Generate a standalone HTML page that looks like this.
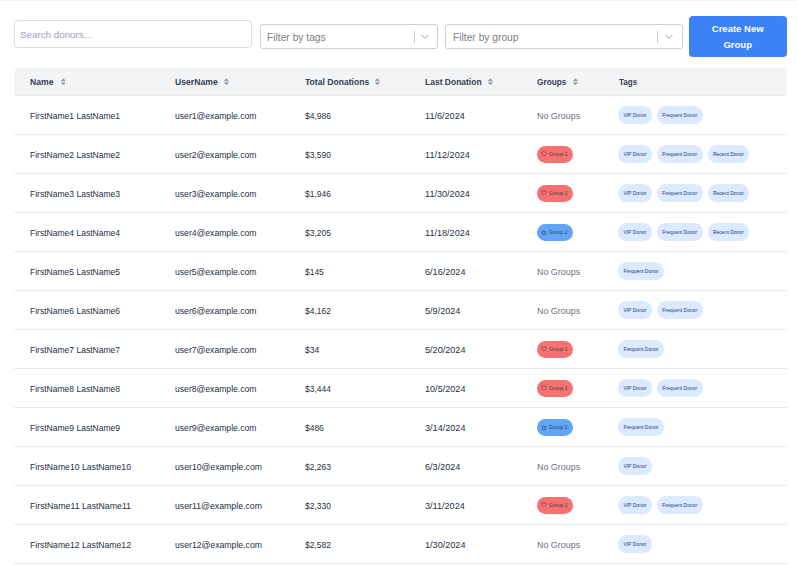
<!DOCTYPE html><html><head><meta charset="utf-8"><style>
*{box-sizing:border-box;margin:0;padding:0}
svg{display:block}
html,body{width:798px;height:565px;overflow:hidden;background:#fff;font-family:"Liberation Sans",sans-serif}
.topline{position:absolute;left:0;top:0;width:798px;height:1px;background:#f1f2f4}
.search{position:absolute;left:14px;top:20px;width:238px;height:28px;border:1px solid #d9dce1;border-radius:4px}
.search span{position:absolute;left:5px;top:7.9px;font-size:9.8px;line-height:11px;color:#9ca3af}
.sel{position:absolute;top:24px;height:25px;border:1px solid #d0d0d0;border-radius:3px}
.sel .ph{position:absolute;left:6.5px;top:6.5px;font-size:10px;line-height:11px;color:#808080;white-space:nowrap;transform:scaleX(1.025);transform-origin:0 50%}
.sel .sep{position:absolute;top:6px;width:1px;height:12px;background:#d0d0d0}
.btn{position:absolute;left:689px;top:16px;width:98px;height:41px;background:#3b82f6;border-radius:4px;color:#fff;text-align:center;font-size:9.8px;font-weight:bold;line-height:15.8px;padding-top:4.8px}
.btn span{display:inline-block;transform:scaleX(0.97)}
.thead{position:absolute;left:14px;top:68px;width:773px;height:28px;background:#f3f4f6;border-radius:5px 5px 0 0;border-bottom:1px solid #e9eaee}
.th{position:absolute;top:0;height:27px;line-height:28px;font-size:9.6px;font-weight:bold;color:#374151;white-space:nowrap;transform:scaleX(0.86);transform-origin:0 50%}
.si{position:absolute;top:77.5px}
.row{position:absolute;left:14px;width:773px;height:39px;border-bottom:1px solid #e9eaee}
.td{position:absolute;top:0.5px;height:38px;line-height:39px;font-size:9px;color:#262f3d;white-space:nowrap;transform:scaleX(0.947);transform-origin:0 50%}
.ng{color:#6b7280}
.gc{position:absolute;left:523px;top:10.5px;width:36px;height:17px;border-radius:8.5px;font-size:5.2px;line-height:17px;color:#374151;white-space:nowrap}
.g1{background:#f87171}
.g2{background:#60a5fa}
.gc .gi{position:absolute;left:4.1px;top:5.8px}
.gc span{position:absolute;left:12px;top:0}
.tags{position:absolute;left:604px;top:10.3px;height:17.5px;display:flex;gap:5px}
.tag{height:17.5px;border-radius:8.75px;background:#dbeafe;color:#1e3a8a;font-size:5px;line-height:18.6px;padding:0 5.4px;white-space:nowrap}
</style></head><body>
<div class="topline"></div>
<div class="search"><span>Search donors...</span></div>
<div class="sel" style="left:260px;width:178px"><span class="ph" style="left:5.5px">Filter by tags</span><div class="sep" style="left:152.5px"></div><div style="position:absolute;left:160px;top:9px"><svg width="8" height="6" viewBox="0 0 8 6"><path d="M0.6 1L4 4.4 7.4 1" fill="none" stroke="#c8c8c8" stroke-width="1.1"/></svg></div></div>
<div class="sel" style="left:445px;width:238px"><span class="ph">Filter by group</span><div class="sep" style="left:211px"></div><div style="position:absolute;left:219px;top:9px"><svg width="8" height="6" viewBox="0 0 8 6"><path d="M0.6 1L4 4.4 7.4 1" fill="none" stroke="#c8c8c8" stroke-width="1.1"/></svg></div></div>
<div class="btn"><span>Create New</span><br><span>Group</span></div>
<div class="thead">
<div class="th" style="left:16px;transform:scaleX(0.9)">Name</div>
<div class="th" style="left:161px;transform:scaleX(0.9)">UserName</div>
<div class="th" style="left:291px;transform:scaleX(0.895)">Total Donations</div>
<div class="th" style="left:411px;transform:scaleX(0.885)">Last Donation</div>
<div class="th" style="left:523px;transform:scaleX(0.86)">Groups</div>
<div class="th" style="left:605px;transform:scaleX(0.84)">Tags</div>
</div>
<div class="si" style="left:60.5px"><svg viewBox="0 0 320 512" width="4.8" height="7.6"><path d="M137.4 41.4c12.5-12.5 32.8-12.5 45.3 0l128 128c9.2 9.2 11.9 22.9 6.9 34.9s-16.6 19.8-29.6 19.8H32c-12.9 0-24.6-7.8-29.6-19.8s-2.2-25.7 6.9-34.9l128-128zm0 429.3l-128-128c-9.2-9.2-11.9-22.9-6.9-34.9s16.6-19.8 29.6-19.8H288c12.9 0 24.6 7.8 29.6 19.8s2.2 25.7-6.9 34.9l-128 128c-12.5 12.5-32.8 12.5-45.3 0z" fill="#9ca3af"/></svg></div>
<div class="si" style="left:224px"><svg viewBox="0 0 320 512" width="4.8" height="7.6"><path d="M137.4 41.4c12.5-12.5 32.8-12.5 45.3 0l128 128c9.2 9.2 11.9 22.9 6.9 34.9s-16.6 19.8-29.6 19.8H32c-12.9 0-24.6-7.8-29.6-19.8s-2.2-25.7 6.9-34.9l128-128zm0 429.3l-128-128c-9.2-9.2-11.9-22.9-6.9-34.9s16.6-19.8 29.6-19.8H288c12.9 0 24.6 7.8 29.6 19.8s2.2 25.7-6.9 34.9l-128 128c-12.5 12.5-32.8 12.5-45.3 0z" fill="#9ca3af"/></svg></div>
<div class="si" style="left:375px"><svg viewBox="0 0 320 512" width="4.8" height="7.6"><path d="M137.4 41.4c12.5-12.5 32.8-12.5 45.3 0l128 128c9.2 9.2 11.9 22.9 6.9 34.9s-16.6 19.8-29.6 19.8H32c-12.9 0-24.6-7.8-29.6-19.8s-2.2-25.7 6.9-34.9l128-128zm0 429.3l-128-128c-9.2-9.2-11.9-22.9-6.9-34.9s16.6-19.8 29.6-19.8H288c12.9 0 24.6 7.8 29.6 19.8s2.2 25.7-6.9 34.9l-128 128c-12.5 12.5-32.8 12.5-45.3 0z" fill="#9ca3af"/></svg></div>
<div class="si" style="left:488px"><svg viewBox="0 0 320 512" width="4.8" height="7.6"><path d="M137.4 41.4c12.5-12.5 32.8-12.5 45.3 0l128 128c9.2 9.2 11.9 22.9 6.9 34.9s-16.6 19.8-29.6 19.8H32c-12.9 0-24.6-7.8-29.6-19.8s-2.2-25.7 6.9-34.9l128-128zm0 429.3l-128-128c-9.2-9.2-11.9-22.9-6.9-34.9s16.6-19.8 29.6-19.8H288c12.9 0 24.6 7.8 29.6 19.8s2.2 25.7-6.9 34.9l-128 128c-12.5 12.5-32.8 12.5-45.3 0z" fill="#9ca3af"/></svg></div>
<div class="si" style="left:573px"><svg viewBox="0 0 320 512" width="4.8" height="7.6"><path d="M137.4 41.4c12.5-12.5 32.8-12.5 45.3 0l128 128c9.2 9.2 11.9 22.9 6.9 34.9s-16.6 19.8-29.6 19.8H32c-12.9 0-24.6-7.8-29.6-19.8s-2.2-25.7 6.9-34.9l128-128zm0 429.3l-128-128c-9.2-9.2-11.9-22.9-6.9-34.9s16.6-19.8 29.6-19.8H288c12.9 0 24.6 7.8 29.6 19.8s2.2 25.7-6.9 34.9l-128 128c-12.5 12.5-32.8 12.5-45.3 0z" fill="#9ca3af"/></svg></div>
<div class="row" style="top:96px">
<div class="td" style="left:16px;transform:scaleX(0.9469)">FirstName1 LastName1</div>
<div class="td" style="left:161px;transform:scaleX(0.9569)">user1@example.com</div>
<div class="td" style="left:291px;transform:scaleX(0.94)">$4,986</div>
<div class="td" style="left:411px;transform:scaleX(1.01)">11/6/2024</div>
<div class="td ng" style="left:523px;transform:scaleX(0.99)">No Groups</div>
<div class="tags"><div class="tag">VIP Donor</div><div class="tag">Frequent Donor</div></div>
</div>
<div class="row" style="top:135px">
<div class="td" style="left:16px;transform:scaleX(0.9469)">FirstName2 LastName2</div>
<div class="td" style="left:161px;transform:scaleX(0.9569)">user2@example.com</div>
<div class="td" style="left:291px;transform:scaleX(0.94)">$3,590</div>
<div class="td" style="left:411px;transform:scaleX(1.01)">11/12/2024</div>
<div class="gc g1"><svg class="gi" viewBox="0 0 24 24" width="5.8" height="5.8"><path d="M19 14c1.49-1.46 3-3.21 3-5.5A5.5 5.5 0 0 0 16.5 3c-1.76 0-3 .5-4.5 2-1.5-1.5-2.74-2-4.5-2A5.5 5.5 0 0 0 2 8.5c0 2.3 1.5 4.05 3 5.5l7 7Z" fill="none" stroke="#374151" stroke-width="2.3" stroke-linejoin="round"/></svg><span>Group 1</span></div>
<div class="tags"><div class="tag">VIP Donor</div><div class="tag">Frequent Donor</div><div class="tag">Recent Donor</div></div>
</div>
<div class="row" style="top:174px">
<div class="td" style="left:16px;transform:scaleX(0.9469)">FirstName3 LastName3</div>
<div class="td" style="left:161px;transform:scaleX(0.9569)">user3@example.com</div>
<div class="td" style="left:291px;transform:scaleX(0.94)">$1,946</div>
<div class="td" style="left:411px;transform:scaleX(1.01)">11/30/2024</div>
<div class="gc g1"><svg class="gi" viewBox="0 0 24 24" width="5.8" height="5.8"><path d="M19 14c1.49-1.46 3-3.21 3-5.5A5.5 5.5 0 0 0 16.5 3c-1.76 0-3 .5-4.5 2-1.5-1.5-2.74-2-4.5-2A5.5 5.5 0 0 0 2 8.5c0 2.3 1.5 4.05 3 5.5l7 7Z" fill="none" stroke="#374151" stroke-width="2.3" stroke-linejoin="round"/></svg><span>Group 1</span></div>
<div class="tags"><div class="tag">VIP Donor</div><div class="tag">Frequent Donor</div><div class="tag">Recent Donor</div></div>
</div>
<div class="row" style="top:213px">
<div class="td" style="left:16px;transform:scaleX(0.9469)">FirstName4 LastName4</div>
<div class="td" style="left:161px;transform:scaleX(0.9569)">user4@example.com</div>
<div class="td" style="left:291px;transform:scaleX(0.94)">$3,205</div>
<div class="td" style="left:411px;transform:scaleX(1.01)">11/18/2024</div>
<div class="gc g2"><svg class="gi" style="top:6.5px;left:4.3px" viewBox="0 0 24 24" width="5.6" height="5.6"><path d="M12 2 15.09 8.26 22 9.27 17 14.14 18.18 21.02 12 17.77 5.82 21.02 7 14.14 2 9.27 8.91 8.26z" fill="none" stroke="#374151" stroke-width="2.6" stroke-linejoin="round"/></svg><span>Group 2</span></div>
<div class="tags"><div class="tag">VIP Donor</div><div class="tag">Frequent Donor</div><div class="tag">Recent Donor</div></div>
</div>
<div class="row" style="top:252px">
<div class="td" style="left:16px;transform:scaleX(0.9469)">FirstName5 LastName5</div>
<div class="td" style="left:161px;transform:scaleX(0.9569)">user5@example.com</div>
<div class="td" style="left:291px;transform:scaleX(0.94)">$145</div>
<div class="td" style="left:411px;transform:scaleX(1.01)">6/16/2024</div>
<div class="td ng" style="left:523px;transform:scaleX(0.99)">No Groups</div>
<div class="tags"><div class="tag">Frequent Donor</div></div>
</div>
<div class="row" style="top:291px">
<div class="td" style="left:16px;transform:scaleX(0.9469)">FirstName6 LastName6</div>
<div class="td" style="left:161px;transform:scaleX(0.9569)">user6@example.com</div>
<div class="td" style="left:291px;transform:scaleX(0.94)">$4,162</div>
<div class="td" style="left:411px;transform:scaleX(1.01)">5/9/2024</div>
<div class="td ng" style="left:523px;transform:scaleX(0.99)">No Groups</div>
<div class="tags"><div class="tag">VIP Donor</div><div class="tag">Frequent Donor</div></div>
</div>
<div class="row" style="top:330px">
<div class="td" style="left:16px;transform:scaleX(0.9469)">FirstName7 LastName7</div>
<div class="td" style="left:161px;transform:scaleX(0.9569)">user7@example.com</div>
<div class="td" style="left:291px;transform:scaleX(0.94)">$34</div>
<div class="td" style="left:411px;transform:scaleX(1.01)">5/20/2024</div>
<div class="gc g1"><svg class="gi" viewBox="0 0 24 24" width="5.8" height="5.8"><path d="M19 14c1.49-1.46 3-3.21 3-5.5A5.5 5.5 0 0 0 16.5 3c-1.76 0-3 .5-4.5 2-1.5-1.5-2.74-2-4.5-2A5.5 5.5 0 0 0 2 8.5c0 2.3 1.5 4.05 3 5.5l7 7Z" fill="none" stroke="#374151" stroke-width="2.3" stroke-linejoin="round"/></svg><span>Group 1</span></div>
<div class="tags"><div class="tag">Frequent Donor</div></div>
</div>
<div class="row" style="top:369px">
<div class="td" style="left:16px;transform:scaleX(0.9469)">FirstName8 LastName8</div>
<div class="td" style="left:161px;transform:scaleX(0.9569)">user8@example.com</div>
<div class="td" style="left:291px;transform:scaleX(0.94)">$3,444</div>
<div class="td" style="left:411px;transform:scaleX(1.01)">10/5/2024</div>
<div class="gc g1"><svg class="gi" viewBox="0 0 24 24" width="5.8" height="5.8"><path d="M19 14c1.49-1.46 3-3.21 3-5.5A5.5 5.5 0 0 0 16.5 3c-1.76 0-3 .5-4.5 2-1.5-1.5-2.74-2-4.5-2A5.5 5.5 0 0 0 2 8.5c0 2.3 1.5 4.05 3 5.5l7 7Z" fill="none" stroke="#374151" stroke-width="2.3" stroke-linejoin="round"/></svg><span>Group 1</span></div>
<div class="tags"><div class="tag">VIP Donor</div><div class="tag">Frequent Donor</div></div>
</div>
<div class="row" style="top:408px">
<div class="td" style="left:16px;transform:scaleX(0.9469)">FirstName9 LastName9</div>
<div class="td" style="left:161px;transform:scaleX(0.9569)">user9@example.com</div>
<div class="td" style="left:291px;transform:scaleX(0.94)">$486</div>
<div class="td" style="left:411px;transform:scaleX(1.01)">3/14/2024</div>
<div class="gc g2"><svg class="gi" style="top:6.5px;left:4.3px" viewBox="0 0 24 24" width="5.6" height="5.6"><path d="M12 2 15.09 8.26 22 9.27 17 14.14 18.18 21.02 12 17.77 5.82 21.02 7 14.14 2 9.27 8.91 8.26z" fill="none" stroke="#374151" stroke-width="2.6" stroke-linejoin="round"/></svg><span>Group 2</span></div>
<div class="tags"><div class="tag">Frequent Donor</div></div>
</div>
<div class="row" style="top:447px">
<div class="td" style="left:16px;transform:scaleX(0.9615)">FirstName10 LastName10</div>
<div class="td" style="left:161px;transform:scaleX(0.9647)">user10@example.com</div>
<div class="td" style="left:291px;transform:scaleX(0.94)">$2,263</div>
<div class="td" style="left:411px;transform:scaleX(1.01)">6/3/2024</div>
<div class="td ng" style="left:523px;transform:scaleX(0.99)">No Groups</div>
<div class="tags"><div class="tag">VIP Donor</div></div>
</div>
<div class="row" style="top:486px">
<div class="td" style="left:16px;transform:scaleX(0.9738)">FirstName11 LastName11</div>
<div class="td" style="left:161px;transform:scaleX(0.9719)">user11@example.com</div>
<div class="td" style="left:291px;transform:scaleX(0.94)">$2,330</div>
<div class="td" style="left:411px;transform:scaleX(1.01)">3/11/2024</div>
<div class="gc g1"><svg class="gi" viewBox="0 0 24 24" width="5.8" height="5.8"><path d="M19 14c1.49-1.46 3-3.21 3-5.5A5.5 5.5 0 0 0 16.5 3c-1.76 0-3 .5-4.5 2-1.5-1.5-2.74-2-4.5-2A5.5 5.5 0 0 0 2 8.5c0 2.3 1.5 4.05 3 5.5l7 7Z" fill="none" stroke="#374151" stroke-width="2.3" stroke-linejoin="round"/></svg><span>Group 1</span></div>
<div class="tags"><div class="tag">VIP Donor</div><div class="tag">Frequent Donor</div></div>
</div>
<div class="row" style="top:525px">
<div class="td" style="left:16px;transform:scaleX(0.9615)">FirstName12 LastName12</div>
<div class="td" style="left:161px;transform:scaleX(0.9647)">user12@example.com</div>
<div class="td" style="left:291px;transform:scaleX(0.94)">$2,582</div>
<div class="td" style="left:411px;transform:scaleX(1.01)">1/30/2024</div>
<div class="td ng" style="left:523px;transform:scaleX(0.99)">No Groups</div>
<div class="tags"><div class="tag">VIP Donor</div></div>
</div>
</body></html>
